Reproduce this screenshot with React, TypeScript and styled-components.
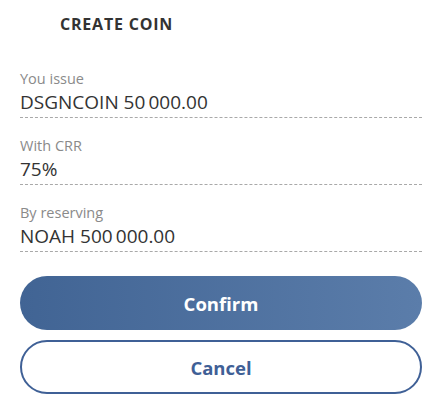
import styled, { createGlobalStyle } from "styled-components";

const GlobalStyle = createGlobalStyle`
  body {
    margin: 0;
    background: #fff;
    font-family: "Open Sans", "DejaVu Sans", sans-serif;
  }
`;

const fields = [
  { label: "You issue", value: "DSGNCOIN 50\u2009000.00" },
  { label: "With CRR", value: "75%" },
  { label: "By reserving", value: "NOAH 500\u2009000.00" },
];

export default function App() {
  return (
    <>
      <GlobalStyle />
      <Panel>
        <Title>CREATE COIN</Title>
        <Fields>
          {fields.map((f) => (
            <Field key={f.label}>
              <Label>{f.label}</Label>
              <Value>{f.value}</Value>
            </Field>
          ))}
        </Fields>
        <Actions>
          <Button $primary>Confirm</Button>
          <Button>Cancel</Button>
        </Actions>
      </Panel>
    </>
  );
}

const Panel = styled.div`
  width: 439px;
  box-sizing: border-box;
  padding: 14px 17px 0 20px;
`;

const Title = styled.h1`
  margin: 0 0 0 40px;
  font-size: 16px;
  font-weight: 700;
  letter-spacing: 0.8px;
  color: #333;
  line-height: 20px;
`;

const Fields = styled.div`
  margin-top: 34px;
  display: flex;
  flex-direction: column;
  gap: 17px;
`;

const Field = styled.div`
  display: flex;
  flex-direction: column;
  border-bottom: 1px dashed #a9a9a9;
  padding-bottom: 2px;
`;

const Label = styled.div`
  font-size: 14.5px;
  line-height: 21px;
  color: #8a8a8a;
`;

const Value = styled.div`
  font-size: 19px;
  line-height: 26px;
  color: #333;
`;

const Actions = styled.div`
  margin-top: 24px;
  display: flex;
  flex-direction: column;
  gap: 10px;
`;

const Button = styled.button<{ $primary?: boolean }>`
  height: 54px;
  border-radius: 27px;
  font-family: inherit;
  font-size: 18.5px;
  font-weight: 700;
  cursor: pointer;
  border: 2px solid #3f6096;
  color: ${(p) => (p.$primary ? "#fff" : "#3f6096")};
  background: ${(p) =>
    p.$primary ? "linear-gradient(90deg, #416494 0%, #5b7daa 100%)" : "#fff"};
  ${(p) => p.$primary && "border: none;"}
`;
